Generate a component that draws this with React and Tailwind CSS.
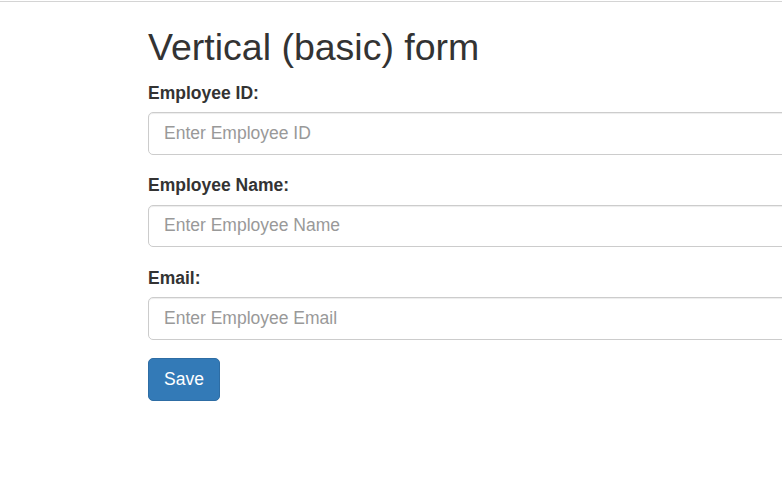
import React from 'react';

const fields = [
    { id: 'empId', label: 'Employee ID:', placeholder: 'Enter Employee ID' },
    { id: 'empName', label: 'Employee Name:', placeholder: 'Enter Employee Name' },
    { id: 'email', label: 'Email:', placeholder: 'Enter Employee Email' },
];

export default function App() {
    return (
        <div className="min-h-screen w-full overflow-hidden bg-white text-[#333] font-['Liberation_Sans',Arial,sans-serif]">
            {/* top rule */}
            <div className="mt-px h-px w-full bg-[#d4d4d4]" />

            <div className="pl-[148px]">
                <h2 className="mt-[25px] mb-[12.5px] text-[37.5px] leading-[1.1] font-normal">Vertical (basic) form</h2>

                <form className="w-[700px]" onSubmit={(e) => e.preventDefault()}>
                    {fields.map((f) => (
                        <div key={f.id} className="mb-[18.75px]">
                            <label htmlFor={f.id} className="block mb-[6.25px] text-[17.5px] leading-[25px] font-bold">
                                {f.label}
                            </label>
                            <input
                                id={f.id}
                                type="text"
                                placeholder={f.placeholder}
                                className="block w-full h-[42.5px] px-[15px] py-[7.5px] text-[17.5px] leading-[25px] text-[#555] placeholder:text-[#999] bg-white border border-[#ccc] rounded-[5px] shadow-[inset_0_1px_1px_rgba(0,0,0,0.075)] outline-none"
                            />
                        </div>
                    ))}

                    <button
                        type="submit"
                        className="h-[42.5px] px-[15px] text-[17.5px] leading-[25px] text-white bg-[#337ab7] border border-[#2e6da4] rounded-[5px]"
                    >
                        Save
                    </button>
                </form>
            </div>
        </div>
    );
}
